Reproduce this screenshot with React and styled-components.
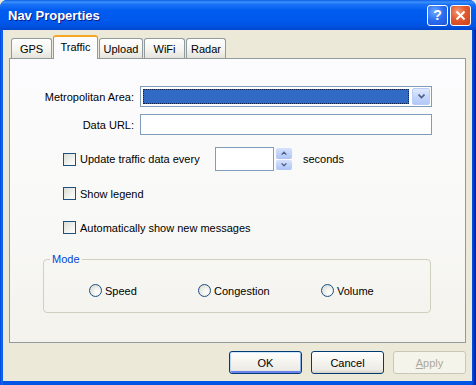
import styled, { createGlobalStyle } from 'styled-components'

const Global = createGlobalStyle`
  body {
    margin: 0;
    background: #ece9d8;
  }
`

const Frame = styled.div`
  width: 476px;
  height: 385px;
  display: flex;
  flex-direction: column;
  background: linear-gradient(90deg, #0046d8 0, #1a6af0 2px, #0055e5 3px, #0055e5 472px, #0036c4 474px, #001c9c 476px);
  border-radius: 7px 7px 0 0;
  overflow: hidden;
  font: 11px 'Liberation Sans', Arial, sans-serif;
  color: #000;
`

const TitleBar = styled.div`
  height: 30px;
  flex: none;
  display: flex;
  align-items: center;
  padding: 0 5px 0 8px;
  background: linear-gradient(180deg, #0a5ee6 0%, #3d91fb 7%, #1a73f6 14%, #005cef 35%, #0058ec 70%, #0052e0 88%, #0045cc 100%);
`

const Title = styled.div`
  flex: 1;
  color: #fff;
  font: bold 13px 'Liberation Sans', Arial, sans-serif;
  text-shadow: 1px 1px 0 #0a1a8a;
`

const CapButton = styled.div`
  width: 21px;
  height: 21px;
  box-sizing: border-box;
  margin-left: 2px;
  border: 1px solid #fff;
  border-radius: 3px;
  display: flex;
  align-items: center;
  justify-content: center;
  color: #fff;
  font: bold 14px 'Liberation Sans', Arial, sans-serif;
  background: ${p => p.$close
    ? 'radial-gradient(circle at 35% 30%, #f49a78 0%, #e2582e 45%, #c9421d 100%)'
    : 'radial-gradient(circle at 35% 30%, #6ea7ff 0%, #2a6df0 50%, #1b52d8 100%)'};
`

const Body = styled.div`
  flex: 1;
  display: flex;
  flex-direction: column;
  margin: 0 4px 4px 3px;
  padding: 5px 6px 7px;
  background: #ece9d8;
`

const Tabs = styled.div`
  display: flex;
  align-items: flex-end;
  height: 23px;
  padding-left: 2px;
  position: relative;
  z-index: 1;
`

const Tab = styled.div`
  box-sizing: border-box;
  width: ${p => p.$width}px;
  height: ${p => (p.$active ? '24px' : '20px')};
  margin-bottom: ${p => (p.$active ? '-1px' : '0')};
  margin-right: 1px;
  padding-top: ${p => (p.$active ? '3px' : '3px')};
  text-align: center;
  border: 1px solid #919b9c;
  border-bottom: none;
  border-top: ${p => (p.$active ? '2px solid #f5a623' : '1px solid #919b9c')};
  border-radius: 3px 3px 0 0;
  background: ${p => (p.$active ? '#fcfcfe' : 'linear-gradient(180deg, #ffffff 0%, #f3f3ef 60%, #e4e2da 100%)')};
  line-height: 14px;
  white-space: nowrap;
`

const Panel = styled.div`
  flex: 1;
  border: 1px solid #919b9c;
  background: linear-gradient(180deg, #fcfcfe 0%, #f8f8f6 60%, #f3f2ec 100%);
  padding-top: 27px;
`

const FieldGrid = styled.div`
  display: grid;
  grid-template-columns: 124px 292px;
  column-gap: 6px;
  row-gap: 7px;
  align-items: center;
`

const FieldLabel = styled.label`
  text-align: right;
`

const Combo = styled.div`
  height: 21px;
  box-sizing: border-box;
  border: 1px solid #7f9db9;
  background: #fff;
  display: flex;
  padding: 1px;
  gap: 1px;
`

const ComboValue = styled.div`
  flex: 1;
  background: #316ac5;
  outline: 1px dotted #0a1f4a;
  outline-offset: -1px;
  margin: 1px 2px 1px 1px;
`

const DropButton = styled.div`
  width: 16px;
  border: 1px solid #b9cdf8;
  border-radius: 2px;
  background: linear-gradient(180deg, #dfe8fe 0%, #c2d4fb 60%, #b3c8f7 100%);
  display: flex;
  align-items: center;
  justify-content: center;
`

const TextBox = styled.div`
  height: 21px;
  box-sizing: border-box;
  border: 1px solid #7f9db9;
  background: #fff;
`

const CheckRow = styled.div`
  display: flex;
  align-items: center;
  padding-left: 53px;
  margin-top: ${p => p.$top}px;
`

const CheckItem = styled.label`
  display: flex;
  align-items: center;
  gap: 4px;
  width: ${p => (p.$width ? `${p.$width}px` : 'auto')};
`

const Box = styled.span`
  width: 13px;
  height: 13px;
  box-sizing: border-box;
  border: 1px solid #1c5180;
  background: linear-gradient(135deg, #dcdcd7 0%, #f2f2ee 60%, #ffffff 100%);
`

const SpinField = styled.div`
  display: flex;
  gap: 2px;
  height: 24px;
`

const SpinText = styled.div`
  width: 59px;
  box-sizing: border-box;
  border: 1px solid #7f9db9;
  background: #fff;
`

const SpinButtons = styled.div`
  width: 16px;
  display: flex;
  flex-direction: column;
  gap: 1px;
  padding: 1px 0;
`

const SpinButton = styled.div`
  flex: 1;
  border-radius: 2px;
  background: linear-gradient(180deg, #d6e2fd 0%, #bdd0fa 60%, #aec4f6 100%);
  display: flex;
  align-items: center;
  justify-content: center;
`

const Units = styled.span`
  margin-left: 11px;
`

const Group = styled.fieldset`
  margin: 19px 0 0 33px;
  width: 388px;
  box-sizing: border-box;
  padding: 19px 0 15px 45px;
  border: 1px solid #d0d0bf;
  border-radius: 4px;
`

const Legend = styled.legend`
  color: #0046d5;
  padding: 0 2px;
  margin-left: -39px;
`

const RadioRow = styled.div`
  display: grid;
  grid-template-columns: 109px 123px auto;
`

const RadioItem = styled.label`
  display: flex;
  align-items: center;
  gap: 3px;
`

const Circle = styled.span`
  width: 13px;
  height: 13px;
  box-sizing: border-box;
  border-radius: 50%;
  border: 1px solid #1c5180;
  background: radial-gradient(circle at 65% 65%, #ffffff 0%, #f0f0ec 40%, #d4d4cc 100%);
`

const ButtonRow = styled.div`
  display: flex;
  justify-content: flex-end;
  gap: 9px;
  margin-top: 8px;
`

const Button = styled.button`
  width: 73px;
  height: 23px;
  padding: 0;
  font: 11px 'Liberation Sans', Arial, sans-serif;
  color: ${p => (p.disabled ? '#aca899' : '#000')};
  border: 1px solid ${p => (p.disabled ? '#c9c7ba' : '#003c74')};
  border-radius: 3px;
  background: ${p => (p.disabled ? '#f5f4ea' : 'linear-gradient(180deg, #ffffff 0%, #f4f3ee 50%, #ecebe6 85%, #d6d0c5 100%)')};
  box-shadow: ${p => (p.$default ? 'inset 0 1px 0 #cee7ff, inset 1px 0 0 #bcd4f6, inset -1px 0 0 #89ade4, inset 0 -2px 0 #6982ee' : 'none')};
  u { text-decoration: underline; }
`

const Chevron = ({ up, size = 7 }) => (
  <svg width={size} height={size - 2} viewBox="0 0 7 5">
    <path d={up ? 'M0.5 4.5 L3.5 1.5 L6.5 4.5' : 'M0.5 0.5 L3.5 3.5 L6.5 0.5'} fill="none" stroke="#4d6185" strokeWidth="1.6" />
  </svg>
)

const Check = ({ label, width }) => (
  <CheckItem $width={width}>
    <Box />
    {label}
  </CheckItem>
)

const Radio = ({ label }) => (
  <RadioItem>
    <Circle />
    {label}
  </RadioItem>
)

const tabs = [
  { name: 'GPS', width: 41 },
  { name: 'Traffic', width: 45 },
  { name: 'Upload', width: 44 },
  { name: 'WiFi', width: 41 },
  { name: 'Radar', width: 40 },
]

export default function App() {
  return (
    <Frame>
      <Global />
      <TitleBar>
        <Title>Nav Properties</Title>
        <CapButton>?</CapButton>
        <CapButton $close>
          <svg width="11" height="11" viewBox="0 0 11 11">
            <path d="M1.5 1.5 L9.5 9.5 M9.5 1.5 L1.5 9.5" stroke="#fff" strokeWidth="2" />
          </svg>
        </CapButton>
      </TitleBar>
      <Body>
        <Tabs>
          {tabs.map(t => (
            <Tab key={t.name} $width={t.width} $active={t.name === 'Traffic'}>{t.name}</Tab>
          ))}
        </Tabs>
        <Panel>
          <FieldGrid>
            <FieldLabel>Metropolitan Area:</FieldLabel>
            <Combo>
              <ComboValue />
              <DropButton><Chevron /></DropButton>
            </Combo>
            <FieldLabel>Data URL:</FieldLabel>
            <TextBox />
          </FieldGrid>
          <CheckRow $top={12}>
            <Check label="Update traffic data every" width={152} />
            <SpinField>
              <SpinText />
              <SpinButtons>
                <SpinButton><Chevron up size={6} /></SpinButton>
                <SpinButton><Chevron size={6} /></SpinButton>
              </SpinButtons>
            </SpinField>
            <Units>seconds</Units>
          </CheckRow>
          <CheckRow $top={16}>
            <Check label="Show legend" />
          </CheckRow>
          <CheckRow $top={21}>
            <Check label="Automatically show new messages" />
          </CheckRow>
          <Group>
            <Legend>Mode</Legend>
            <RadioRow>
              <Radio label="Speed" />
              <Radio label="Congestion" />
              <Radio label="Volume" />
            </RadioRow>
          </Group>
        </Panel>
        <ButtonRow>
          <Button $default>OK</Button>
          <Button>Cancel</Button>
          <Button disabled><u>A</u>pply</Button>
        </ButtonRow>
      </Body>
    </Frame>
  )
}
